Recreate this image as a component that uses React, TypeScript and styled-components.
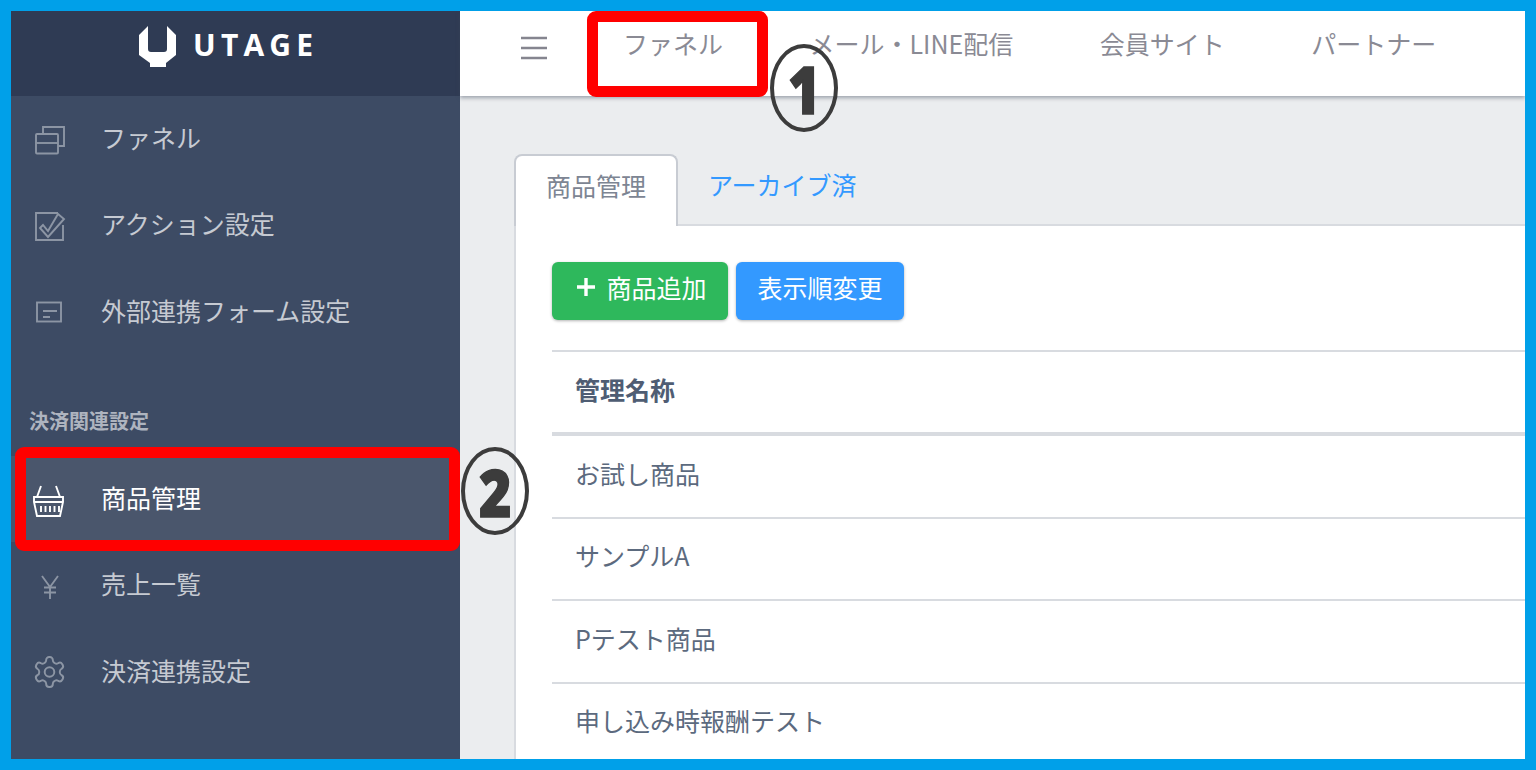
import React from "react";
import styled, { createGlobalStyle } from "styled-components";

const Global = createGlobalStyle`
  html, body { margin: 0; padding: 0; height: 100%; overflow: hidden; }
  * { box-sizing: border-box; }
  body { font-family: "Noto Sans CJK JP", "Noto Sans", sans-serif; }
`;

const Frame = styled.div`
  position: relative;
  width: 1536px;
  height: 770px;
  padding: 11px;
  background: #00a0e9;
  overflow: hidden;
`;
const Screen = styled.div`
  display: flex;
  width: 100%;
  height: 100%;
  overflow: hidden;
`;
const Sidebar = styled.aside`
  flex: 0 0 449px;
  background: #3d4b64;
  display: flex;
  flex-direction: column;
`;
const Brand = styled.div`
  height: 85px;
  flex: none;
  background: #2f3b54;
  display: flex;
  align-items: flex-start;
  padding: 14px 0 0 128px;
  gap: 17px;
`;
const BrandName = styled.span`
  font-family: "Open Sans", sans-serif;
  font-weight: 700;
  font-size: 30px;
  line-height: 40px;
  letter-spacing: 5.2px;
  color: #fff;
`;
const NavItem = styled.div<{ $active?: boolean }>`
  height: 86.6px;
  flex: none;
  display: flex;
  align-items: center;
  padding-left: 20px;
  font-size: 25px;
  line-height: 36px;
  color: ${(p) => (p.$active ? "#fff" : "#c6cad2")};
  background: ${(p) => (p.$active ? "#4a566c" : "transparent")};
`;
const NavText = styled.span`
  padding-bottom: 5px;
`;
const NavIcon = styled.svg<{ $active?: boolean }>`
  width: 38px;
  height: 38px;
  flex: none;
  margin-right: 32px;
  fill: none;
  stroke: ${(p) => (p.$active ? "#fff" : "#8c95a4")};
  stroke-width: 1.9;
`;
const SectionLabel = styled.div`
  height: 100px;
  flex: none;
  padding: 50px 0 0 18px;
  font-size: 20px;
  line-height: 30px;
  font-weight: 700;
  color: #aeb4bf;
`;
const Main = styled.main`
  flex: 1;
  min-width: 0;
  background: #ebedef;
  display: flex;
  flex-direction: column;
`;
const TopBar = styled.header`
  height: 85px;
  flex: none;
  background: #fff;
  box-shadow: 0 2px 4px rgba(60, 70, 90, 0.45);
  display: flex;
  align-items: flex-start;
  padding: 14px 0 0 61px;
  position: relative;
`;
const Burger = styled.svg`
  width: 26px;
  height: 24px;
  margin: 11px 76px 0 0;
  flex: none;
  stroke: #85858f;
  stroke-width: 2.4;
`;
const TopLinks = styled.nav`
  display: flex;
  gap: 86.5px;
`;
const TopLink = styled.span`
  font-size: 25px;
  line-height: 36px;
  color: #8a8a94;
  white-space: nowrap;
`;
const Content = styled.div`
  flex: 1;
  padding: 58px 0 0 54px;
  min-height: 0;
`;
const Tabs = styled.div`
  display: flex;
  height: 70px;
`;
const ActiveTab = styled.div`
  width: 164px;
  height: 72px;
  background: #fff;
  border: 2px solid #c8ccd3;
  border-bottom: 0;
  border-radius: 8px 8px 0 0;
  font-size: 25px;
  line-height: 58px;
  text-align: center;
  color: #7d8593;
  position: relative;
  z-index: 1;
`;
const LinkTab = styled.div`
  padding-left: 30px;
  font-size: 25px;
  line-height: 60px;
  color: #3399ff;
`;
const Card = styled.section`
  background: #fff;
  border: 2px solid #d8dbe0;
  border-right: 0;
  height: 600px;
  padding: 36px 0 0 36px;
`;
const Actions = styled.div`
  display: flex;
  gap: 8px;
  margin-bottom: 30px;
`;
const Button = styled.button<{ $color: string; $width: number }>`
  width: ${(p) => p.$width}px;
  height: 58px;
  border: 0;
  border-radius: 6px;
  padding: 0 0 8px 0;
  background: ${(p) => p.$color};
  box-shadow: 0 1px 3px rgba(0, 0, 0, 0.3);
  color: #fff;
  font: 400 25px/36px "Noto Sans CJK JP", sans-serif;
  display: flex;
  align-items: center;
  justify-content: center;
  gap: 10px;
`;
const PlusIcon = styled.svg`
  width: 20px;
  height: 20px;
  margin-left: 3px;
  stroke: #fff;
  stroke-width: 3.4;
`;
const Table = styled.div`
  border-top: 2px solid #d8dbe0;
`;
const HeadRow = styled.div`
  height: 84px;
  border-bottom: 4px solid #d8dbe0;
  padding: 0 0 7px 23px;
  display: flex;
  align-items: center;
  font-size: 25px;
  font-weight: 700;
  color: #4f5d73;
`;
const Row = styled.div`
  height: 82.5px;
  border-bottom: 2px solid #d8dbe0;
  padding: 0 0 7px 23px;
  display: flex;
  align-items: center;
  font-size: 25px;
  color: #5c6a7e;
`;
const RedBox = styled.div<{ $x: number; $y: number; $w: number; $h: number }>`
  position: absolute;
  left: ${(p) => p.$x}px;
  top: ${(p) => p.$y}px;
  width: ${(p) => p.$w}px;
  height: ${(p) => p.$h}px;
  border: 11px solid #ff0000;
  border-radius: 9px;
`;
const Badge = styled.div<{ $x: number; $y: number }>`
  position: absolute;
  left: ${(p) => p.$x}px;
  top: ${(p) => p.$y}px;
  width: 68px;
  height: 88px;
  border: 4px solid #3c3c3c;
  border-radius: 50%;
  display: flex;
  align-items: center;
  justify-content: center;
  color: #3c3c3c;
`;
const BadgeDigit = styled.span`
  display: block;
  font: 800 66px/1 "Open Sans", sans-serif;
  -webkit-text-stroke: 1.4px #3c3c3c;
  transform: scaleX(0.84);
`;

const items1 = [
  {
    t: "ファネル",
    i: (
      <>
        <path d="M12 14V7h21v19h-6" />
        <rect x="5" y="14" width="22" height="19.5" rx="1" />
        <path d="M5 23h22" />
      </>
    ),
  },
  {
    t: "アクション設定",
    i: (
      <>
        <path d="M27 6H5v27h27V18" />
        <path d="M9 21l3-3 5 6L27 7l6 5-16 18z" />
      </>
    ),
  },
  {
    t: "外部連携フォーム設定",
    i: (
      <>
        <rect x="6" y="9.5" width="24" height="19" />
        <path d="M12 18h14M12 24h7" />
      </>
    ),
  },
];

export default function App() {
  return (
    <Frame>
      <Global />
      <Screen>
        <Sidebar>
          <Brand>
            <svg width="37" height="42" viewBox="0 0 37 42">
              <path
                fill="#fff"
                d="M9 1L0 10v20l11 8v4h16v-4l10-8V10l-9-9v23q0 3-3 3H12q-3 0-3-3z"
              />
            </svg>
            <BrandName>UTAGE</BrandName>
          </Brand>
          {items1.map((m) => (
            <NavItem key={m.t}>
              <NavIcon viewBox="0 0 38 38">{m.i}</NavIcon>
              <NavText>{m.t}</NavText>
            </NavItem>
          ))}
          <SectionLabel>決済関連設定</SectionLabel>
          <NavItem $active>
            <NavIcon $active viewBox="0 0 38 38">
              <path d="M3 17h29v5l-3 14H6L3 22z" />
              <path d="M6 17l4-11M29 17l-4-11M3 22h29M10 26v6M14.5 26v6M19 26v6M23.5 26v6M28 26v6" />
            </NavIcon>
            <NavText>商品管理</NavText>
          </NavItem>
          <NavItem>
            <NavIcon viewBox="0 0 38 38">
              <path d="M11 9l8 11 8-11M19 20v12M13 20.5h12M13 25.5h12" />
            </NavIcon>
            <NavText>売上一覧</NavText>
          </NavItem>
          <NavItem>
            <NavIcon viewBox="0 0 38 38">
              <g transform="translate(0.5 1) scale(1.5)" strokeWidth="1.3">
                <path d="M12.22 2h-.44a2 2 0 0 0-2 2v.18a2 2 0 0 1-1 1.73l-.43.25a2 2 0 0 1-2 0l-.15-.08a2 2 0 0 0-2.73.73l-.22.38a2 2 0 0 0 .73 2.73l.15.1a2 2 0 0 1 1 1.72v.51a2 2 0 0 1-1 1.74l-.15.09a2 2 0 0 0-.73 2.73l.22.38a2 2 0 0 0 2.73.73l.15-.08a2 2 0 0 1 2 0l.43.25a2 2 0 0 1 1 1.73V20a2 2 0 0 0 2 2h.44a2 2 0 0 0 2-2v-.18a2 2 0 0 1 1-1.73l.43-.25a2 2 0 0 1 2 0l.15.08a2 2 0 0 0 2.73-.73l.22-.39a2 2 0 0 0-.73-2.73l-.15-.08a2 2 0 0 1-1-1.74v-.5a2 2 0 0 1 1-1.74l.15-.09a2 2 0 0 0 .73-2.73l-.22-.38a2 2 0 0 0-2.73-.73l-.15.08a2 2 0 0 1-2 0l-.43-.25a2 2 0 0 1-1-1.73V4a2 2 0 0 0-2-2z" />
                <circle cx="12" cy="12" r="3.2" />
              </g>
            </NavIcon>
            <NavText>決済連携設定</NavText>
          </NavItem>
        </Sidebar>
        <Main>
          <TopBar>
            <Burger viewBox="0 0 26 24">
              <path d="M0 2h26M0 12h26M0 22h26" />
            </Burger>
            <TopLinks>
              <TopLink>ファネル</TopLink>
              <TopLink>メール・LINE配信</TopLink>
              <TopLink>会員サイト</TopLink>
              <TopLink>パートナー</TopLink>
            </TopLinks>
          </TopBar>
          <Content>
            <Tabs>
              <ActiveTab>商品管理</ActiveTab>
              <LinkTab>アーカイブ済</LinkTab>
            </Tabs>
            <Card>
              <Actions>
                <Button $color="#2eb85c" $width={176}>
                  <PlusIcon viewBox="0 0 20 20">
                    <path d="M10 1v18M1 10h18" />
                  </PlusIcon>
                  商品追加
                </Button>
                <Button $color="#3399ff" $width={168}>
                  表示順変更
                </Button>
              </Actions>
              <Table>
                <HeadRow>管理名称</HeadRow>
                <Row>お試し商品</Row>
                <Row>サンプルA</Row>
                <Row>Pテスト商品</Row>
                <Row>申し込み時報酬テスト</Row>
              </Table>
            </Card>
          </Content>
        </Main>
      </Screen>
      <RedBox $x={587} $y={11} $w={181} $h={86} />
      <RedBox $x={15} $y={447} $w={445} $h={104} />
      <Badge $x={770} $y={44}>
        <BadgeDigit>1</BadgeDigit>
      </Badge>
      <Badge $x={461} $y={447}>
        <BadgeDigit>2</BadgeDigit>
      </Badge>
    </Frame>
  );
}
